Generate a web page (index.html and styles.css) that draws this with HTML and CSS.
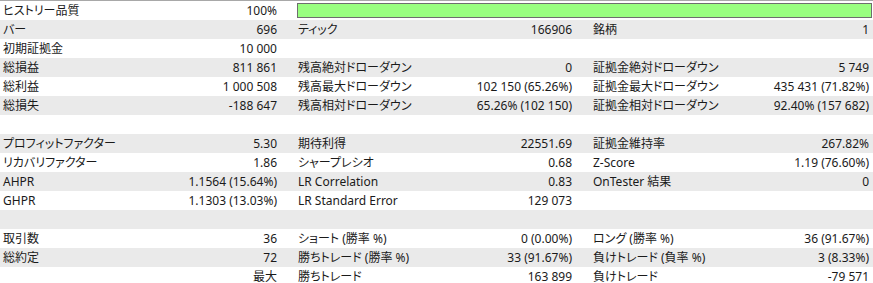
FILE: index.html
```html
<!DOCTYPE html>
<html lang="ja">
<head>
<meta charset="utf-8">
<link rel="stylesheet" href="styles.css">
</head>
<body>
<div class="report">
  <div class="row">
    <div class="cell"><span>ヒストリー品質</span><span>100%</span></div>
    <div class="bar-cell"><div class="bar"></div></div>
  </div>
  <div class="row">
    <div class="cell"><span>バー</span><span>696</span></div>
    <div class="cell"><span>ティック</span><span>166906</span></div>
    <div class="cell last"><span>銘柄</span><span>1</span></div>
  </div>
  <div class="row">
    <div class="cell"><span>初期証拠金</span><span>10 000</span></div>
    <div class="cell"></div>
    <div class="cell last"></div>
  </div>
  <div class="row">
    <div class="cell"><span>総損益</span><span>811 861</span></div>
    <div class="cell"><span>残高絶対ドローダウン</span><span>0</span></div>
    <div class="cell last"><span>証拠金絶対ドローダウン</span><span>5 749</span></div>
  </div>
  <div class="row">
    <div class="cell"><span>総利益</span><span>1 000 508</span></div>
    <div class="cell"><span>残高最大ドローダウン</span><span>102 150 (65.26%)</span></div>
    <div class="cell last"><span>証拠金最大ドローダウン</span><span>435 431 (71.82%)</span></div>
  </div>
  <div class="row">
    <div class="cell"><span>総損失</span><span>-188 647</span></div>
    <div class="cell"><span>残高相対ドローダウン</span><span>65.26% (102 150)</span></div>
    <div class="cell last"><span>証拠金相対ドローダウン</span><span>92.40% (157 682)</span></div>
  </div>
  <div class="row"></div>
  <div class="row">
    <div class="cell"><span>プロフィットファクター</span><span>5.30</span></div>
    <div class="cell"><span>期待利得</span><span>22551.69</span></div>
    <div class="cell last"><span>証拠金維持率</span><span>267.82%</span></div>
  </div>
  <div class="row">
    <div class="cell"><span>リカバリファクター</span><span>1.86</span></div>
    <div class="cell"><span>シャープレシオ</span><span>0.68</span></div>
    <div class="cell last"><span>Z-Score</span><span>1.19 (76.60%)</span></div>
  </div>
  <div class="row">
    <div class="cell"><span>AHPR</span><span>1.1564 (15.64%)</span></div>
    <div class="cell"><span>LR Correlation</span><span>0.83</span></div>
    <div class="cell last"><span>OnTester 結果</span><span>0</span></div>
  </div>
  <div class="row">
    <div class="cell"><span>GHPR</span><span>1.1303 (13.03%)</span></div>
    <div class="cell"><span>LR Standard Error</span><span>129 073</span></div>
    <div class="cell last"></div>
  </div>
  <div class="row"></div>
  <div class="row">
    <div class="cell"><span>取引数</span><span>36</span></div>
    <div class="cell"><span>ショート (勝率 %)</span><span>0 (0.00%)</span></div>
    <div class="cell last"><span>ロング (勝率 %)</span><span>36 (91.67%)</span></div>
  </div>
  <div class="row">
    <div class="cell"><span>総約定</span><span>72</span></div>
    <div class="cell"><span>勝ちトレード (勝率 %)</span><span>33 (91.67%)</span></div>
    <div class="cell last"><span>負けトレード (負率 %)</span><span>3 (8.33%)</span></div>
  </div>
  <div class="row">
    <div class="cell"><span></span><span>最大</span></div>
    <div class="cell"><span>勝ちトレード</span><span>163 899</span></div>
    <div class="cell last"><span>負けトレード</span><span>-79 571</span></div>
  </div>
</div>
</body>
</html>
```

FILE: styles.css
```css
html, body {
  margin: 0;
  padding: 0;
  background: #ffffff;
}

body {
  font-family: "Noto Sans", "Noto Sans CJK JP", sans-serif;
  font-size: 12px;
  color: #1a1a1a;
  font-feature-settings: "palt";
  overflow: hidden;
}

.report {
  border-top: 1px solid #a8a8a8;
  width: 873px;
}

.row {
  display: grid;
  grid-template-columns: 295px 295px 283px;
  height: 19px;
  line-height: 19px;
  white-space: nowrap;
}

.row:nth-child(even) {
  background: #eaeaea;
}

.cell {
  display: flex;
  justify-content: space-between;
  padding: 0 18px 0 3px;
  overflow: hidden;
}

.cell.last {
  padding-right: 4px;
}

.bar-cell {
  grid-column: 2 / 4;
  padding: 2px 1px 2px 2px;
}

.bar {
  height: 15px;
  box-sizing: border-box;
  background: #99ff80;
  border: 1px solid #6e6e6e;
}
```
